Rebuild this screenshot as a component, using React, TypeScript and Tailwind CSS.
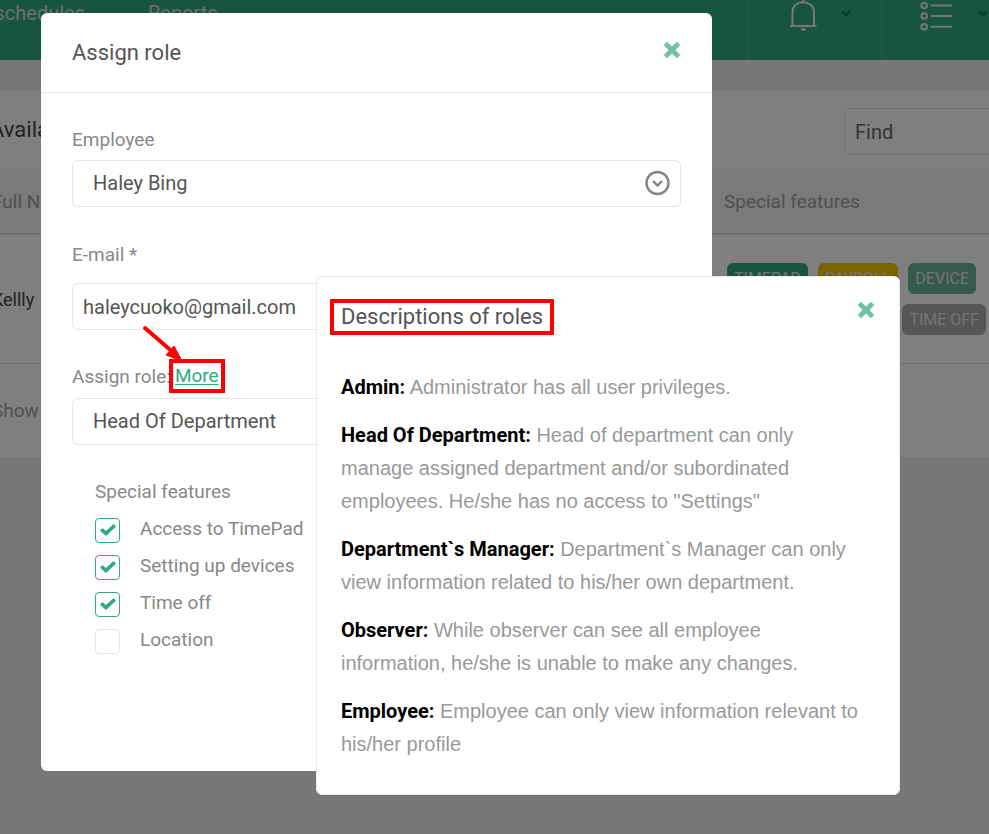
import type { ReactNode } from 'react';

const roles = [
  { name: 'Admin:', text: 'Administrator has all user privileges.' },
  {
    name: 'Head Of Department:',
    text: 'Head of department can only manage assigned department and/or subordinated employees. He/she has no access to "Settings"',
  },
  {
    name: 'Department`s Manager:',
    text: 'Department`s Manager can only view information related to his/her own department.',
  },
  {
    name: 'Observer:',
    text: 'While observer can see all employee information, he/she is unable to make any changes.',
  },
  { name: 'Employee:', text: 'Employee can only view information relevant to his/her profile' },
];

const features = [
  { id: 'timepad', label: 'Access to TimePad', on: true },
  { id: 'devices', label: 'Setting up devices', on: true },
  { id: 'timeoff', label: 'Time off', on: true },
  { id: 'location', label: 'Location', on: false },
];

function CloseButton({ label }: { label: string }) {
  return (
    <button type="button" aria-label={label} className="p-[2px] text-[#6fc2a5]">
      <svg viewBox="0 0 18 18" className="size-[18px]" fill="currentColor">
        <path d="M4.600 1.200 9 5.600 13.400 1.200Q14 .7 14.600 1.200L16.800 3.400Q17.300 4 16.800 4.600L12.400 9 16.800 13.400Q17.300 14 16.800 14.600L14.600 16.800Q14 17.300 13.400 16.800L9 12.400 4.600 16.800Q4 17.300 3.400 16.800L1.200 14.600Q.7 14 1.200 13.400L5.600 9 1.200 4.600Q.7 4 1.200 3.400L3.400 1.200Q4 .7 4.600 1.200Z" />
      </svg>
    </button>
  );
}

function Caret() {
  return (
    <svg viewBox="0 0 10 7" className="h-[7px] w-[10px]" fill="none" stroke="#127d58" strokeWidth="3">
      <path d="M1.2 1.4 5 5 8.8 1.4" />
    </svg>
  );
}

function Tag({ className, children }: { className: string; children: ReactNode }) {
  return (
    <span className={`h-[31px] rounded-md px-[7px] text-base leading-[31px] text-[#e8e8e8] ${className}`}>
      {children}
    </span>
  );
}

function Page() {
  return (
    <div className="min-h-screen overflow-hidden bg-[#eeeeee] pb-8">
      <header className="flex h-[60px] items-start justify-between bg-[#30ab7e]">
        <nav className="flex gap-[63px] text-xl leading-[26px] text-[#dddddd]">
          <a href="#schedules" className="flex w-[85px] justify-end overflow-hidden">schedules</a>
          <a href="#reports">Reports</a>
        </nav>
        <div className="flex h-full">
          <button type="button" aria-label="Notifications" className="flex w-[133px] items-start gap-6 border-l border-[#4ebb93] pl-10">
            <svg viewBox="0 0 28 32" className="h-8 w-7" fill="none" stroke="#eeeeee" strokeWidth="2">
              <path d="M3.500 26V12C3.500 6 8 2.200 14 2.200S25 6 25 12V26M.8 26H27.500M14.500 2.500V0" />
              <path d="M12 28.200H17C17 30 16 31 14.500 31S12 30 12 28.200Z" fill="#eeeeee" stroke="none" />
            </svg>
            <span className="pt-[10px]"><Caret /></span>
          </button>
          <button type="button" aria-label="Lists" className="flex w-[108px] items-start gap-[26px] border-l border-[#4ebb93] pl-[38px]">
            <svg viewBox="0 0 32 32" className="size-8 shrink-0" fill="none" stroke="#eeeeee" strokeWidth="2">
              <circle cx="4.200" cy="5.500" r="2.800" />
              <circle cx="4.200" cy="16" r="2.800" />
              <circle cx="4.200" cy="26.700" r="2.800" />
              <path d="M11 5.500H32M11 16H32M11 26.700H32" />
            </svg>
            <span className="pt-[10px]"><Caret /></span>
          </button>
        </div>
      </header>

      <main className="mt-[31px] -ml-[10px] bg-white">
        <div className="flex h-[78px] items-end justify-between pb-[14px]">
          <h1 className="text-[22px] leading-[50px] text-[#444444]">Available users</h1>
          <input
            type="search"
            aria-label="Find"
            placeholder="Find"
            className="mr-[-20px] h-[47px] w-[165px] rounded-md border border-[#e2e2e2] px-[10px] text-xl placeholder:text-[#666666]"
          />
        </div>
        <table className="w-full table-fixed text-left">
          <thead>
            <tr className="h-[65px] border-b-2 border-[#dddddd] bg-[#f5f5f5] text-[19px] text-[#a0a0a0]">
              <th className="pt-[2px] pl-[2px] font-normal">Full Name</th>
              <th className="w-[265px] pt-[2px] font-normal">Special features</th>
            </tr>
          </thead>
          <tbody>
            <tr className="h-[129px] border-b border-[#dddddd]">
              <td className="pt-[2px] pl-[2px] text-lg text-[#444444]">Kellly</td>
              <td>
                <div className="flex flex-col items-end gap-[10px] pr-[3px]">
                  <div className="flex w-full gap-[10px] pl-[3px]">
                    <Tag className="bg-[#30ab7e]">TIMEPAD</Tag>
                    <Tag className="bg-[#f5c800]">PAYROLL</Tag>
                    <Tag className="bg-[#6ab596]">DEVICE</Tag>
                  </div>
                  <Tag className="bg-[#adadad]">TIME OFF</Tag>
                </div>
              </td>
            </tr>
          </tbody>
        </table>
        <div className="flex h-[93px] items-center pt-[2px] pl-[2px] text-[19px] text-[#a0a0a0]">Show</div>
      </main>
    </div>
  );
}

function RolesPopover() {
  return (
    <section
      aria-labelledby="roles-title"
      className="absolute top-[263px] left-[275px] w-[584px] rounded-md border border-[#eaeaea] bg-white pt-[22px] pr-[22px] pb-[33px] pl-6"
    >
      <div className="flex items-start justify-between">
        <h2
          id="roles-title"
          className="-ml-[11px] rounded-[1px] border-4 border-[#ff0000] px-[7px] text-[22px] leading-7 text-[#555555]"
        >
          Descriptions of roles
        </h2>
        <CloseButton label="Close descriptions" />
      </div>
      <div className="mt-9 space-y-[15px] pr-[10px] font-['Liberation_Sans',Arial,sans-serif] text-xl leading-[33px] text-[#999999]">
        {roles.map((role) => (
          <p key={role.name}>
            <strong className="font-['Roboto',sans-serif] font-bold text-black">{role.name}</strong> {role.text}
          </p>
        ))}
      </div>
    </section>
  );
}

function AssignRole() {
  return (
    <div role="dialog" aria-labelledby="assign-title" className="relative w-[671px] rounded-md bg-white pb-[115px]">
      <div className="flex h-20 items-start justify-between border-b border-[#e5e5e5] pt-[26px] pr-[29px] pl-[31px]">
        <h2 id="assign-title" className="text-[22px] leading-7 text-[#555555]">Assign role</h2>
        <CloseButton label="Close" />
      </div>
      <form className="px-[31px] pt-8 text-[19px] leading-[30px] text-[#888888]">
        <label htmlFor="employee" className="block">Employee</label>
        <div className="relative mt-[5px]">
          <select
            id="employee"
            className="block h-[47px] w-full appearance-none rounded-md border border-[#e5e5e5] bg-white px-5 pb-[2px] text-xl text-[#555555]"
          >
            <option>Haley Bing</option>
          </select>
          <svg viewBox="0 0 26 26" className="pointer-events-none absolute top-[10px] right-[10px] size-[26px]" fill="none" stroke="#858585" strokeWidth="2.400">
            <circle cx="12.500" cy="13" r="11" />
            <path d="M8 11 12.500 15.500 17 11" />
          </svg>
        </div>

        <label htmlFor="email" className="mt-[33px] block">E-mail *</label>
        <input
          id="email"
          type="email"
          defaultValue="haleycuoko@gmail.com"
          className="mt-[13px] block h-[47px] w-full rounded-md border border-[#e5e5e5] px-[10px] text-xl text-[#555555]"
        />

        <div className="mt-8 flex items-start gap-1">
          <label htmlFor="role">Assign role:</label>
          <span className="relative pt-[3px] leading-[22px]">
            <a href="#roles" className="block text-[#30ab7e] underline underline-offset-2 outline-4 outline-offset-2 outline-[#ff0000]">
              More
            </a>
            <svg viewBox="0 0 44 40" className="absolute bottom-[23px] left-[-34px] h-10 w-11" fill="none" stroke="#ff0000">
              <path d="M4 4 34 30" strokeWidth="4" strokeLinecap="round" />
              <path d="M41 37 25 31 33 22Z" fill="#ff0000" />
            </svg>
          </span>
        </div>
        <select
          id="role"
          className="mt-[6px] block h-[47px] w-full appearance-none rounded-md border border-[#e5e5e5] bg-white px-5 pb-[2px] text-xl text-[#555555]"
        >
          <option>Head Of Department</option>
        </select>

        <fieldset className="mt-8 ml-[23px]">
          <legend>Special features</legend>
          <div className="mt-2 flex flex-col gap-[7px]">
            {features.map((f) => (
              <div key={f.id} className="flex items-center gap-5">
                <span className="relative flex">
                  <input
                    id={f.id}
                    type="checkbox"
                    defaultChecked={f.on}
                    className="peer size-[25px] appearance-none rounded-[4px] border border-[#e5e5e5] checked:border-[#30ab7e]"
                  />
                  <svg viewBox="0 0 16 12" className="pointer-events-none absolute top-[6px] left-[5px] hidden h-3 w-4 peer-checked:block" fill="#30ab7e">
                    <path d="M5.300 11.600.4 6.900Q0 6.400.4 6L2 4.400Q2.500 4 3 4.400L5.900 7.100 13 .4Q13.500 0 14 .4L15.600 2Q16 2.500 15.600 3L6.500 11.600Q5.900 12 5.300 11.600Z" />
                  </svg>
                </span>
                <label htmlFor={f.id} className="pb-[2px] leading-7">{f.label}</label>
              </div>
            ))}
          </div>
        </fieldset>
      </form>
      <RolesPopover />
    </div>
  );
}

export default function App() {
  return (
    <div className="relative min-h-screen overflow-hidden font-['Roboto','Liberation_Sans',sans-serif]">
      <Page />
      <div className="absolute inset-0 bg-black/50 pt-[13px] pl-[41px]">
        <AssignRole />
      </div>
    </div>
  );
}
